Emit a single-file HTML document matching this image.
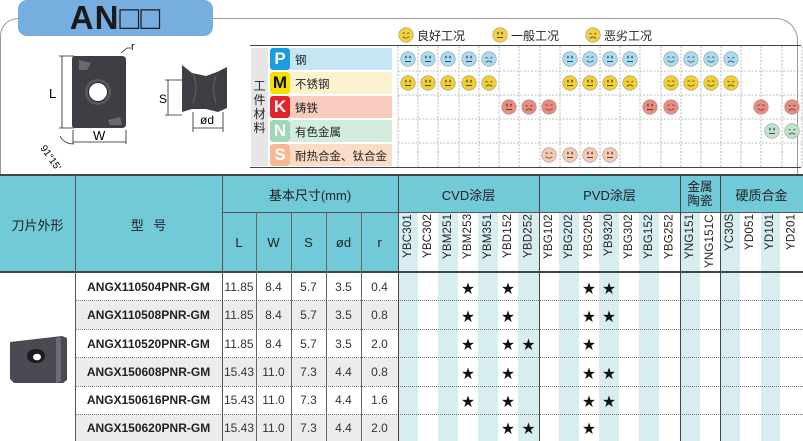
<!DOCTYPE html>
<html><head><meta charset="utf-8">
<style>
*{margin:0;padding:0;box-sizing:border-box}
body{width:803px;height:441px;overflow:hidden;background:#fff;font-family:"Liberation Sans","Noto Sans CJK SC",sans-serif;position:relative;color:#222}
.a{position:absolute}
.c{position:absolute;display:flex;align-items:center;justify-content:center;text-align:center}
.hd{background:#72c9d8}
.v{writing-mode:vertical-rl;transform:rotate(180deg);font-size:11.5px;letter-spacing:0.2px}
.st{font-size:13px;color:#111}
.m{font-weight:bold;font-size:12px}
.d{font-size:12px;color:#333}
.dot{position:absolute;left:75px;width:728px;height:0;border-top:1px dotted #777}
</style></head><body>
<svg width="0" height="0" style="position:absolute">
<defs>
<symbol id="hp" viewBox="0 0 16 16"><circle cx="8" cy="8" r="7.3" fill="currentColor" stroke="#999" stroke-width=".6"/><path d="M4.5 6.5q1.2-1.3 2.4 0M9.1 6.5q1.2-1.3 2.4 0M4.6 9.6q3.4 3 6.8 0" stroke="#555" stroke-width=".9" fill="none"/></symbol>
<symbol id="ne" viewBox="0 0 16 16"><circle cx="8" cy="8" r="7.3" fill="currentColor" stroke="#999" stroke-width=".6"/><rect x="5.3" y="4.8" width="1.3" height="2.6" fill="#444"/><rect x="9.4" y="4.8" width="1.3" height="2.6" fill="#444"/><path d="M5 10.5h6" stroke="#444" stroke-width="1"/></symbol>
<symbol id="sd" viewBox="0 0 16 16"><circle cx="8" cy="8" r="7.3" fill="currentColor" stroke="#999" stroke-width=".6"/><path d="M4.5 6.2l2.2 1M11.5 6.2l-2.2 1M4.8 11.5q3.2-3 6.4 0" stroke="#555" stroke-width=".9" fill="none"/></symbol>
</defs></svg>

<div class="a" style="left:0;top:18px;width:798px;height:160px;border:1.5px solid #999;border-bottom:none;border-radius:18px 22px 0 0"></div>
<div class="c" style="left:18px;top:0;width:195px;height:36px;background:#76aee0;border-radius:9px;font-weight:bold;font-size:33px;color:#1a1a1a;letter-spacing:1px">AN□□</div>

<svg class="a" style="left:30px;top:40px" width="200" height="130" viewBox="30 40 200 130">
<g stroke="#222" stroke-width=".8" fill="none">
<path d="M59 56h15M59 128h15M62 56v72M73 130v14M126 130v14M73 142h53M165 80h17M165 115h17M168 80v35M193 112v20M223 112v20M193 128h30"/>
<path d="M60 136q4 8 14 8"/>
<path d="M121 53l6-5h4"/>
</g>
<path d="M75 56h47q4 0 4 4v64q0 4-4 4h-47q-3 0-3-3v-66q0-3 3-3z" fill="#3e3e44"/>
<path d="M79 60l12 3-4 7-8 0zM108 120l12-3 2 8-12 0z" fill="#6a6a70"/>
<circle cx="98" cy="92" r="13" fill="#58585e"/>
<circle cx="98" cy="92" r="9.5" fill="#fff" stroke="#222"/>
<path d="M182 65l10 8 14 3 11-4 10-5v41l-9 4-12-3h-14l-10 3z" fill="#3e3e44"/>
<path d="M193 73q6 14 0 30M216 76q-5 12 0 27" stroke="#666" fill="none"/>
<text x="49" y="98" font-size="13" font-family="Liberation Sans">L</text>
<text x="93" y="140" font-size="13" font-family="Liberation Sans">W</text>
<text x="159" y="103" font-size="12" font-family="Liberation Sans">S</text>
<text x="200" y="124" font-size="12" font-family="Liberation Sans">ød</text>
<text x="131" y="50" font-size="11" font-family="Liberation Sans">r</text>
<text x="40" y="148" font-size="10" font-family="Liberation Sans" transform="rotate(55 40 148)">91°15'</text>
</svg>

<svg class="a" style="left:398px;top:27px;color:#f4d23c" width="16" height="16"><use href="#hp"/></svg>
<div class="a" style="left:417px;top:27px;font-size:12px">良好工况</div>
<svg class="a" style="left:492px;top:27px;color:#f4d23c" width="16" height="16"><use href="#ne"/></svg>
<div class="a" style="left:511px;top:27px;font-size:12px">一般工况</div>
<svg class="a" style="left:585px;top:27px;color:#f4d23c" width="16" height="16"><use href="#sd"/></svg>
<div class="a" style="left:604px;top:27px;font-size:12px">恶劣工况</div>

<div class="a" style="left:250px;top:45px;width:551px;height:123px;border-top:1.5px solid #444;border-bottom:1.5px solid #444"></div>
<div class="a" style="left:251px;top:48px;width:17px;height:118px;background:#e6e6e6"></div>
<div class="c" style="left:251px;top:48px;width:17px;height:118px;font-size:12px;line-height:14px;flex-direction:column">工<br>件<br>材<br>料</div>
<div class="a" style="left:290px;top:48px;width:102px;height:22px;background:#c6e6f6"></div>
<div class="a" style="left:290px;top:72px;width:102px;height:22px;background:#fdf2cf"></div>
<div class="a" style="left:290px;top:96px;width:102px;height:22px;background:#f7ccbd"></div>
<div class="a" style="left:290px;top:120px;width:102px;height:22px;background:#d2eddc"></div>
<div class="a" style="left:290px;top:144px;width:102px;height:22px;background:#fbdcc7"></div>
<div class="c" style="left:270px;top:48px;width:20px;height:22px;background:#1c9de0;color:#fff;font-weight:bold;font-size:17px;border-radius:3px">P</div>
<div class="c" style="left:270px;top:72px;width:20px;height:22px;background:#f5e000;color:#111;font-weight:bold;font-size:17px;border-radius:3px">M</div>
<div class="c" style="left:270px;top:96px;width:20px;height:22px;background:#e0252b;color:#fff;font-weight:bold;font-size:17px;border-radius:3px">K</div>
<div class="c" style="left:270px;top:120px;width:20px;height:22px;background:#9fd8b6;color:#fff;font-weight:bold;font-size:17px;border-radius:3px">N</div>
<div class="c" style="left:270px;top:144px;width:20px;height:22px;background:#f6b993;color:#fff;font-weight:bold;font-size:17px;border-radius:3px">S</div>
<div class="a" style="left:295px;top:52px;font-size:11.5px">钢</div>
<div class="a" style="left:295px;top:76px;font-size:11.5px">不锈钢</div>
<div class="a" style="left:295px;top:100px;font-size:11.5px">铸铁</div>
<div class="a" style="left:295px;top:124px;font-size:11.5px">有色金属</div>
<div class="a" style="left:295px;top:148px;font-size:11.5px">耐热合金、钛合金</div>
<svg class="a" style="left:392px;top:46px" width="411" height="122">
<g stroke="#aaa" stroke-dasharray="2,1.5" stroke-width=".8">
<path d="M6 0v122M26 0v122M46 0v122M67 0v122M87 0v122M107 0v122M127 0v122M148 0v122M168 0v122M188 0v122M208 0v122M228 0v122M248 0v122M269 0v122M289 0v122M309 0v122M329 0v122M349 0v122M369 0v122M390 0v122M410 0v122"/>
<path d="M6 25h404M6 49h404M6 73h404M6 97h404"/>
</g></svg>
<div class="a" style="left:0;top:0;color:#a8dcf2">
<svg class="a" style="left:400px;top:51px" width="16" height="16"><use href="#ne"/></svg>
<svg class="a" style="left:420px;top:51px" width="16" height="16"><use href="#ne"/></svg>
<svg class="a" style="left:440px;top:51px" width="16" height="16"><use href="#ne"/></svg>
<svg class="a" style="left:461px;top:51px" width="16" height="16"><use href="#ne"/></svg>
<svg class="a" style="left:481px;top:51px" width="16" height="16"><use href="#sd"/></svg>
<svg class="a" style="left:562px;top:51px" width="16" height="16"><use href="#ne"/></svg>
<svg class="a" style="left:582px;top:51px" width="16" height="16"><use href="#hp"/></svg>
<svg class="a" style="left:602px;top:51px" width="16" height="16"><use href="#ne"/></svg>
<svg class="a" style="left:622px;top:51px" width="16" height="16"><use href="#ne"/></svg>
<svg class="a" style="left:663px;top:51px" width="16" height="16"><use href="#hp"/></svg>
<svg class="a" style="left:683px;top:51px" width="16" height="16"><use href="#hp"/></svg>
<svg class="a" style="left:703px;top:51px" width="16" height="16"><use href="#hp"/></svg>
<svg class="a" style="left:723px;top:51px" width="16" height="16"><use href="#sd"/></svg>
</div>
<div class="a" style="left:0;top:0;color:#f3cf2a">
<svg class="a" style="left:400px;top:75px" width="16" height="16"><use href="#ne"/></svg>
<svg class="a" style="left:420px;top:75px" width="16" height="16"><use href="#ne"/></svg>
<svg class="a" style="left:440px;top:75px" width="16" height="16"><use href="#ne"/></svg>
<svg class="a" style="left:461px;top:75px" width="16" height="16"><use href="#ne"/></svg>
<svg class="a" style="left:481px;top:75px" width="16" height="16"><use href="#sd"/></svg>
<svg class="a" style="left:562px;top:75px" width="16" height="16"><use href="#ne"/></svg>
<svg class="a" style="left:582px;top:75px" width="16" height="16"><use href="#ne"/></svg>
<svg class="a" style="left:602px;top:75px" width="16" height="16"><use href="#ne"/></svg>
<svg class="a" style="left:622px;top:75px" width="16" height="16"><use href="#sd"/></svg>
<svg class="a" style="left:663px;top:75px" width="16" height="16"><use href="#hp"/></svg>
<svg class="a" style="left:683px;top:75px" width="16" height="16"><use href="#hp"/></svg>
<svg class="a" style="left:703px;top:75px" width="16" height="16"><use href="#hp"/></svg>
<svg class="a" style="left:723px;top:75px" width="16" height="16"><use href="#sd"/></svg>
</div>
<div class="a" style="left:0;top:0;color:#ec8a7c">
<svg class="a" style="left:501px;top:99px" width="16" height="16"><use href="#ne"/></svg>
<svg class="a" style="left:521px;top:99px" width="16" height="16"><use href="#sd"/></svg>
<svg class="a" style="left:541px;top:99px" width="16" height="16"><use href="#hp"/></svg>
<svg class="a" style="left:642px;top:99px" width="16" height="16"><use href="#ne"/></svg>
<svg class="a" style="left:663px;top:99px" width="16" height="16"><use href="#hp"/></svg>
<svg class="a" style="left:753px;top:99px" width="16" height="16"><use href="#hp"/></svg>
<svg class="a" style="left:784px;top:99px" width="16" height="16"><use href="#sd"/></svg>
</div>
<div class="a" style="left:0;top:0;color:#bfe3cf">
<svg class="a" style="left:764px;top:123px" width="16" height="16"><use href="#ne"/></svg>
<svg class="a" style="left:784px;top:123px" width="16" height="16"><use href="#sd"/></svg>
</div>
<div class="a" style="left:0;top:0;color:#f7c9ae">
<svg class="a" style="left:541px;top:147px" width="16" height="16"><use href="#hp"/></svg>
<svg class="a" style="left:562px;top:147px" width="16" height="16"><use href="#ne"/></svg>
<svg class="a" style="left:582px;top:147px" width="16" height="16"><use href="#ne"/></svg>
<svg class="a" style="left:602px;top:147px" width="16" height="16"><use href="#ne"/></svg>
</div>

<div class="a hd" style="left:0;top:175px;width:803px;height:37px"></div>
<div class="a hd" style="left:0;top:212px;width:398px;height:60px"></div>
<div class="a" style="left:0;top:174px;width:803px;height:2px;background:#444"></div>
<div class="a" style="left:398px;top:212px;width:20px;height:229px;background:#d7edf0"></div>
<div class="a" style="left:438px;top:212px;width:20px;height:229px;background:#d7edf0"></div>
<div class="a" style="left:478px;top:212px;width:20px;height:229px;background:#d7edf0"></div>
<div class="a" style="left:518px;top:212px;width:21px;height:229px;background:#d7edf0"></div>
<div class="a" style="left:559px;top:212px;width:20px;height:229px;background:#d7edf0"></div>
<div class="a" style="left:599px;top:212px;width:20px;height:229px;background:#d7edf0"></div>
<div class="a" style="left:639px;top:212px;width:20px;height:229px;background:#d7edf0"></div>
<div class="a" style="left:681px;top:212px;width:19px;height:229px;background:#d7edf0"></div>
<div class="a" style="left:721px;top:212px;width:19px;height:229px;background:#d7edf0"></div>
<div class="a" style="left:761px;top:212px;width:19px;height:229px;background:#d7edf0"></div>
<div class="a" style="left:75px;top:301px;width:323px;height:28px;background:#ececec"></div>
<div class="a" style="left:75px;top:358px;width:323px;height:28px;background:#ececec"></div>
<div class="a" style="left:75px;top:414px;width:323px;height:27px;background:#ececec"></div>
<div class="a" style="left:222px;top:212px;width:581px;height:1px;background:#555"></div>
<div class="a" style="left:0;top:271px;width:803px;height:2px;background:#444"></div>
<div class="dot" style="top:300px"></div><div class="dot" style="top:329px"></div><div class="dot" style="top:357px"></div><div class="dot" style="top:386px"></div><div class="dot" style="top:414px"></div>
<div class="a" style="left:75px;top:175px;width:1px;height:266px;background:#555"></div>
<div class="a" style="left:222px;top:175px;width:1px;height:266px;background:#555"></div>
<div class="a" style="left:256px;top:212px;width:1px;height:229px;background:#666"></div>
<div class="a" style="left:291px;top:212px;width:1px;height:229px;background:#666"></div>
<div class="a" style="left:326px;top:212px;width:1px;height:229px;background:#666"></div>
<div class="a" style="left:361px;top:212px;width:1px;height:229px;background:#666"></div>
<div class="a" style="left:398px;top:175px;width:1px;height:266px;background:#444"></div>
<div class="a" style="left:539px;top:175px;width:1px;height:266px;background:#444"></div>
<div class="a" style="left:680px;top:175px;width:1px;height:266px;background:#444"></div>
<div class="a" style="left:720px;top:175px;width:1px;height:266px;background:#444"></div>

<div class="c" style="left:0;top:176px;width:75px;height:96px;font-size:13px">刀片外形</div>
<div class="c" style="left:75px;top:176px;width:147px;height:96px;font-size:13px;word-spacing:6px">型 号</div>
<div class="c" style="left:222px;top:176px;width:176px;height:36px;font-size:13px">基本尺寸(mm)</div>
<div class="c" style="left:222px;top:212px;width:34px;height:60px;font-size:13px">L</div>
<div class="c" style="left:256px;top:212px;width:35px;height:60px;font-size:13px">W</div>
<div class="c" style="left:291px;top:212px;width:35px;height:60px;font-size:13px">S</div>
<div class="c" style="left:326px;top:212px;width:35px;height:60px;font-size:13px">ød</div>
<div class="c" style="left:361px;top:212px;width:37px;height:60px;font-size:13px">r</div>
<div class="c" style="left:398px;top:176px;width:141px;height:36px;font-size:13px">CVD涂层</div>
<div class="c" style="left:539px;top:176px;width:141px;height:36px;font-size:13px">PVD涂层</div>
<div class="c" style="left:680px;top:176px;width:40px;height:36px;font-size:12.5px;line-height:14px">金属<br>陶瓷</div>
<div class="c" style="left:720px;top:176px;width:83px;height:36px;font-size:13px">硬质合金</div>

<div class="a" style="left:0;top:0">
<div class="c v" style="left:398px;top:214px;width:20px;height:56px;justify-content:flex-end">YBC301</div>
<div class="c v" style="left:418px;top:214px;width:20px;height:56px;justify-content:flex-end">YBC302</div>
<div class="c v" style="left:438px;top:214px;width:20px;height:56px;justify-content:flex-end">YBM251</div>
<div class="c v" style="left:458px;top:214px;width:20px;height:56px;justify-content:flex-end">YBM253</div>
<div class="c v" style="left:478px;top:214px;width:20px;height:56px;justify-content:flex-end">YBM351</div>
<div class="c v" style="left:498px;top:214px;width:20px;height:56px;justify-content:flex-end">YBD152</div>
<div class="c v" style="left:518px;top:214px;width:21px;height:56px;justify-content:flex-end">YBD252</div>
<div class="c v" style="left:539px;top:214px;width:20px;height:56px;justify-content:flex-end">YBG102</div>
<div class="c v" style="left:559px;top:214px;width:20px;height:56px;justify-content:flex-end">YBG202</div>
<div class="c v" style="left:579px;top:214px;width:20px;height:56px;justify-content:flex-end">YBG205</div>
<div class="c v" style="left:599px;top:214px;width:20px;height:56px;justify-content:flex-end">YB9320</div>
<div class="c v" style="left:619px;top:214px;width:20px;height:56px;justify-content:flex-end">YBG302</div>
<div class="c v" style="left:639px;top:214px;width:20px;height:56px;justify-content:flex-end">YBG152</div>
<div class="c v" style="left:659px;top:214px;width:21px;height:56px;justify-content:flex-end">YBG252</div>
<div class="c v" style="left:680px;top:214px;width:20px;height:56px;justify-content:flex-end">YNG151</div>
<div class="c v" style="left:700px;top:214px;width:20px;height:56px;justify-content:flex-end">YNG151C</div>
<div class="c v" style="left:720px;top:214px;width:20px;height:56px;justify-content:flex-end">YC30S</div>
<div class="c v" style="left:740px;top:214px;width:20px;height:56px;justify-content:flex-end">YD051</div>
<div class="c v" style="left:760px;top:214px;width:20px;height:56px;justify-content:flex-end">YD101</div>
<div class="c v" style="left:780px;top:214px;width:23px;height:56px;justify-content:flex-end">YD201</div>
</div>

<svg class="a" style="left:6px;top:330px" width="62" height="56" viewBox="0 0 62 56">
<path d="M4 12l52-6 5 2v42l-4 3H8l-4-4z" fill="#4a4a52"/>
<path d="M50 8l5-1v44l-5 2z" fill="#6b6b73"/>
<ellipse cx="30" cy="26" rx="9" ry="7" fill="#1c1c20"/>
<ellipse cx="31" cy="27" rx="4" ry="3.3" fill="#fff"/>
</svg>

<div class="c m" style="left:75px;top:273px;width:147px;height:28px">ANGX110504PNR-GM</div>
<div class="c m" style="left:75px;top:301px;width:147px;height:28px">ANGX110508PNR-GM</div>
<div class="c m" style="left:75px;top:329px;width:147px;height:29px">ANGX110520PNR-GM</div>
<div class="c m" style="left:75px;top:358px;width:147px;height:28px">ANGX150608PNR-GM</div>
<div class="c m" style="left:75px;top:386px;width:147px;height:28px">ANGX150616PNR-GM</div>
<div class="c m" style="left:75px;top:414px;width:147px;height:27px">ANGX150620PNR-GM</div>

<div class="c d" style="left:222px;top:273px;width:34px;height:28px">11.85</div><div class="c d" style="left:256px;top:273px;width:35px;height:28px">8.4</div><div class="c d" style="left:291px;top:273px;width:35px;height:28px">5.7</div><div class="c d" style="left:326px;top:273px;width:35px;height:28px">3.5</div><div class="c d" style="left:361px;top:273px;width:37px;height:28px">0.4</div>
<div class="c d" style="left:222px;top:301px;width:34px;height:28px">11.85</div><div class="c d" style="left:256px;top:301px;width:35px;height:28px">8.4</div><div class="c d" style="left:291px;top:301px;width:35px;height:28px">5.7</div><div class="c d" style="left:326px;top:301px;width:35px;height:28px">3.5</div><div class="c d" style="left:361px;top:301px;width:37px;height:28px">0.8</div>
<div class="c d" style="left:222px;top:329px;width:34px;height:29px">11.85</div><div class="c d" style="left:256px;top:329px;width:35px;height:29px">8.4</div><div class="c d" style="left:291px;top:329px;width:35px;height:29px">5.7</div><div class="c d" style="left:326px;top:329px;width:35px;height:29px">3.5</div><div class="c d" style="left:361px;top:329px;width:37px;height:29px">2.0</div>
<div class="c d" style="left:222px;top:358px;width:34px;height:28px">15.43</div><div class="c d" style="left:256px;top:358px;width:35px;height:28px">11.0</div><div class="c d" style="left:291px;top:358px;width:35px;height:28px">7.3</div><div class="c d" style="left:326px;top:358px;width:35px;height:28px">4.4</div><div class="c d" style="left:361px;top:358px;width:37px;height:28px">0.8</div>
<div class="c d" style="left:222px;top:386px;width:34px;height:28px">15.43</div><div class="c d" style="left:256px;top:386px;width:35px;height:28px">11.0</div><div class="c d" style="left:291px;top:386px;width:35px;height:28px">7.3</div><div class="c d" style="left:326px;top:386px;width:35px;height:28px">4.4</div><div class="c d" style="left:361px;top:386px;width:37px;height:28px">1.6</div>
<div class="c d" style="left:222px;top:414px;width:34px;height:27px">15.43</div><div class="c d" style="left:256px;top:414px;width:35px;height:27px">11.0</div><div class="c d" style="left:291px;top:414px;width:35px;height:27px">7.3</div><div class="c d" style="left:326px;top:414px;width:35px;height:27px">4.4</div><div class="c d" style="left:361px;top:414px;width:37px;height:27px">2.0</div>

<div class="c st" style="left:458px;top:273px;width:20px;height:28px">★</div><div class="c st" style="left:498px;top:273px;width:20px;height:28px">★</div><div class="c st" style="left:579px;top:273px;width:20px;height:28px">★</div><div class="c st" style="left:599px;top:273px;width:20px;height:28px">★</div>
<div class="c st" style="left:458px;top:301px;width:20px;height:28px">★</div><div class="c st" style="left:498px;top:301px;width:20px;height:28px">★</div><div class="c st" style="left:579px;top:301px;width:20px;height:28px">★</div><div class="c st" style="left:599px;top:301px;width:20px;height:28px">★</div>
<div class="c st" style="left:458px;top:329px;width:20px;height:29px">★</div><div class="c st" style="left:498px;top:329px;width:20px;height:29px">★</div><div class="c st" style="left:518px;top:329px;width:21px;height:29px">★</div><div class="c st" style="left:579px;top:329px;width:20px;height:29px">★</div>
<div class="c st" style="left:458px;top:358px;width:20px;height:28px">★</div><div class="c st" style="left:498px;top:358px;width:20px;height:28px">★</div><div class="c st" style="left:579px;top:358px;width:20px;height:28px">★</div><div class="c st" style="left:599px;top:358px;width:20px;height:28px">★</div>
<div class="c st" style="left:458px;top:386px;width:20px;height:28px">★</div><div class="c st" style="left:498px;top:386px;width:20px;height:28px">★</div><div class="c st" style="left:579px;top:386px;width:20px;height:28px">★</div><div class="c st" style="left:599px;top:386px;width:20px;height:28px">★</div>
<div class="c st" style="left:498px;top:414px;width:20px;height:27px">★</div><div class="c st" style="left:518px;top:414px;width:21px;height:27px">★</div><div class="c st" style="left:579px;top:414px;width:20px;height:27px">★</div>
</body></html>
